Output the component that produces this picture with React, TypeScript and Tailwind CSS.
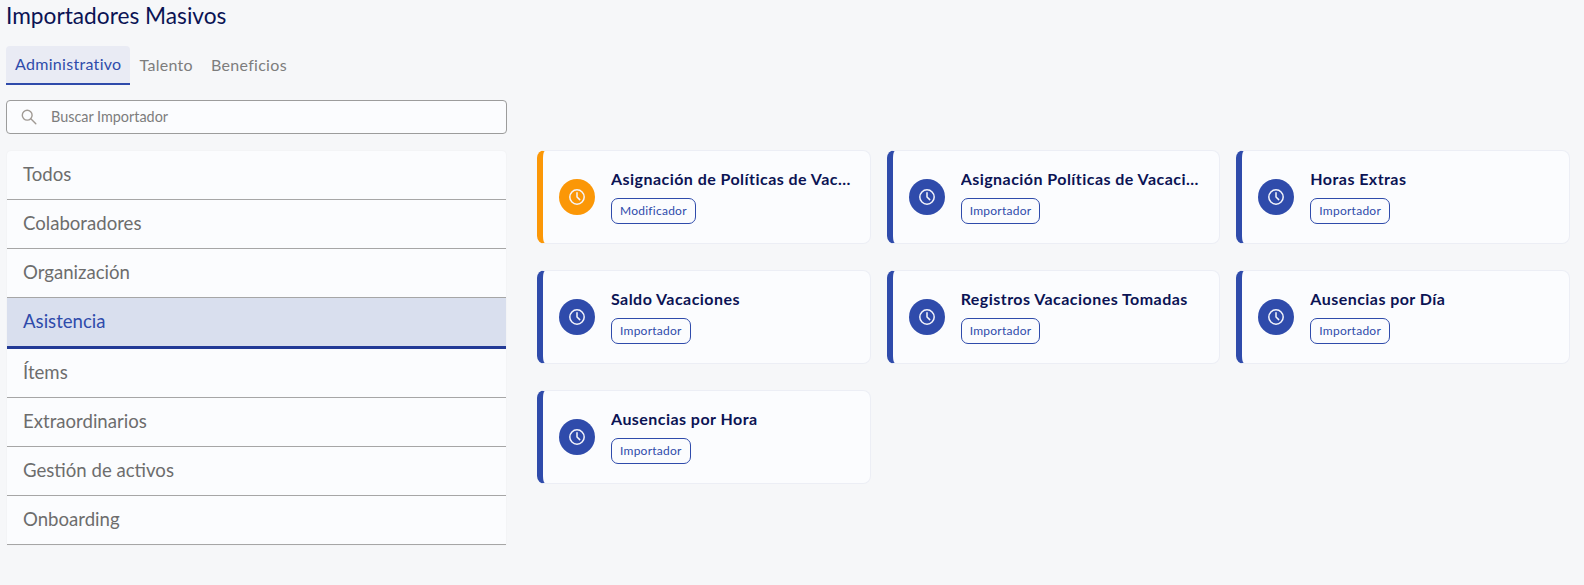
const groups = [
  "Todos",
  "Colaboradores",
  "Organización",
  "Asistencia",
  "Ítems",
  "Extraordinarios",
  "Gestión de activos",
  "Onboarding",
];

const importers = [
  { title: "Asignación de Políticas de Vacaciones", tag: "Modificador", warn: true },
  { title: "Asignación Políticas de Vacaciones", tag: "Importador" },
  { title: "Horas Extras", tag: "Importador" },
  { title: "Saldo Vacaciones", tag: "Importador" },
  { title: "Registros Vacaciones Tomadas", tag: "Importador" },
  { title: "Ausencias por Día", tag: "Importador" },
  { title: "Ausencias por Hora", tag: "Importador" },
];

const ClockIcon = () => (
  <svg width="18" height="18" viewBox="0 0 18 18" fill="none" stroke="#f4f5fb" strokeWidth="1.5" strokeLinecap="round">
    <circle cx="9" cy="9" r="7.2" />
    <path d="M9 4.8V9l2.7 2.6" />
  </svg>
);

const SearchIcon = () => (
  <svg width="16" height="16" viewBox="0 0 16 16" fill="none" stroke="#a09a94" strokeWidth="1.4" strokeLinecap="round">
    <circle cx="6.2" cy="6.2" r="4.9" />
    <path d="M9.8 9.8l5 5" />
  </svg>
);

const ImporterCard = ({ title, tag, warn }: { title: string; tag: string; warn?: boolean }) => {
  return (
    <div
      className={`flex h-[94px] items-center rounded-lg border border-l-[6px] bg-[#fbfcfe] pr-[18px] pl-[16px] ${
        warn ? "border-[#eceef5] border-l-[#fb9707]" : "border-[#eceef5] border-l-[#2f4bab]"
      }`}
    >
      <div
        className={`flex h-9 w-9 shrink-0 items-center justify-center rounded-full ${
          warn ? "bg-[#fb9707]" : "bg-[#2f4bab]"
        }`}
      >
        <ClockIcon />
      </div>
      <div className="ml-4 min-w-0 flex-1 pb-[2px]">
        <div className="truncate text-[16px] leading-[20px] font-bold tracking-[0.45px] text-[#0b1354]">{title}</div>
        <span className="mt-[9px] inline-block rounded-[7px] border border-[#2f4bab] px-2 text-[12px] leading-[24px] tracking-[0.25px] text-[#2f4bab]">
          {tag}
        </span>
      </div>
    </div>
  );
};

export default function App() {
  return (
    <div className="h-[585px] bg-[#f6f7f9] pr-[14px] pl-[6px] font-['Lato',sans-serif]">
      <h1 className="pt-[2px] text-[22.7px] leading-[28px] text-[#0b1354]">Importadores Masivos</h1>
      <div className="mt-[16px] flex items-stretch text-[16px] tracking-[0.3px]">
        <div className="flex h-[39px] items-center rounded-t border-b-2 border-[#2f4bab] bg-[#e9ebf4] px-[9px] pb-[2px] text-[#2f4bab]">
          Administrativo
        </div>
        <div className="flex h-[39px] items-center px-[9px] pb-[2px] text-[#7d7d7d]">Talento</div>
        <div className="flex h-[39px] items-center px-[9px] pb-[2px] text-[#7d7d7d]">Beneficios</div>
      </div>
      <div className="mt-[15px] flex gap-[30px]">
        <div className="w-[501px] shrink-0">
          <div className="flex h-[34px] items-center rounded border border-[#9c9c9c] bg-[#fbfcfe] pl-[14px]">
            <SearchIcon />
            <span className="ml-[14px] text-[14.4px] text-[#7d7d7d]">Buscar Importador</span>
          </div>
          <div className="mx-px mt-[17px] rounded-t bg-[#fbfcfe] shadow-[0_0_2px_rgba(0,0,0,0.06)]">
            {groups.map((g) =>
              g === "Asistencia" ? (
                <div
                  key={g}
                  className="flex h-[51px] items-center border-b-[3px] border-[#233a96] bg-[#d9dfee] pl-[16px] text-[18.6px] text-[#2f4bab]"
                >
                  {g}
                </div>
              ) : (
                <div key={g} className="flex h-[49px] items-center border-b border-[#a6a6a6] pl-[16px] text-[18.6px] text-[#6d6d6d]">
                  {g}
                </div>
              )
            )}
          </div>
        </div>
        <div className="mt-[50px] grid flex-1 grid-cols-3 content-start gap-x-4 gap-y-[26px]">
          {importers.map((item) => (
            <ImporterCard key={item.title} {...item} />
          ))}
        </div>
      </div>
    </div>
  );
}
